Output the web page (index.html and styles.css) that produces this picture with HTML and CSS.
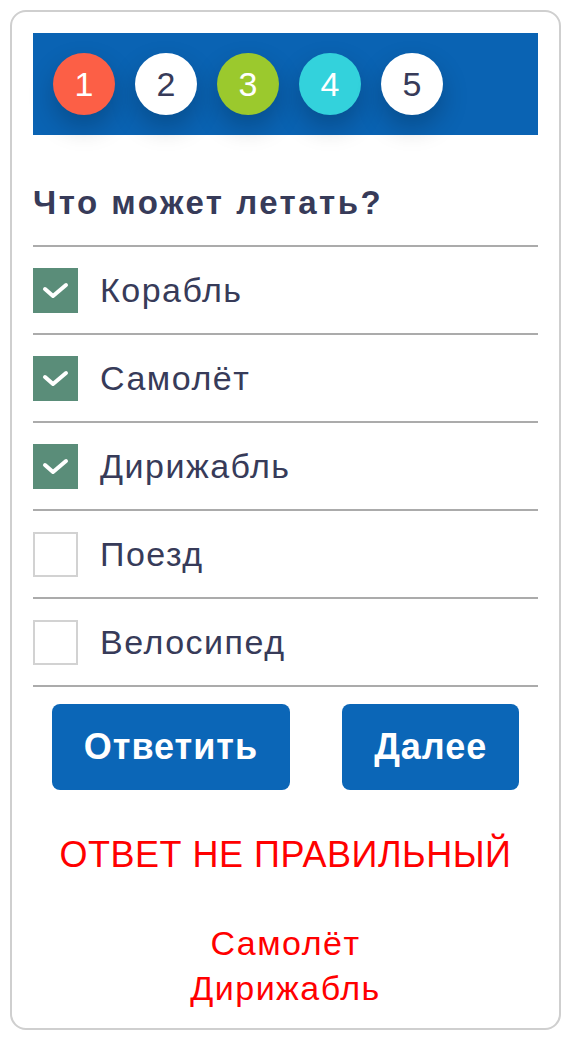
FILE: index.html
```html
<!DOCTYPE html>
<html lang="ru">
<head>
    <meta charset="UTF-8">
    <meta name="viewport" content="width=device-width, initial-scale=1.0">
    <title>Тест</title>
    <link rel="stylesheet" href="styles.css">
</head>
<body>
    <div class="card">
        <div class="steps">
            <span class="step step-red">1</span>
            <span class="step step-white">2</span>
            <span class="step step-green">3</span>
            <span class="step step-cyan">4</span>
            <span class="step step-white">5</span>
        </div>

        <h2 class="question">Что может летать?</h2>

        <ul class="options">
            <li class="option">
                <span class="box checked">
                    <svg viewBox="0 0 45 45" width="45" height="45"><polyline points="12,21 20,28 33,17" /></svg>
                </span>
                <span class="label">Корабль</span>
            </li>
            <li class="option">
                <span class="box checked">
                    <svg viewBox="0 0 45 45" width="45" height="45"><polyline points="12,21 20,28 33,17" /></svg>
                </span>
                <span class="label">Самолёт</span>
            </li>
            <li class="option">
                <span class="box checked">
                    <svg viewBox="0 0 45 45" width="45" height="45"><polyline points="12,21 20,28 33,17" /></svg>
                </span>
                <span class="label">Дирижабль</span>
            </li>
            <li class="option">
                <span class="box"></span>
                <span class="label">Поезд</span>
            </li>
            <li class="option">
                <span class="box"></span>
                <span class="label">Велосипед</span>
            </li>
        </ul>

        <div class="actions">
            <button class="btn btn-answer">Ответить</button>
            <button class="btn btn-next">Далее</button>
        </div>

        <div class="result">ОТВЕТ НЕ ПРАВИЛЬНЫЙ</div>
        <div class="correct">
            Самолёт<br>
            Дирижабль
        </div>
    </div>
</body>
</html>
```

FILE: styles.css
```css
* {
    box-sizing: border-box;
    margin: 0;
    padding: 0;
}

body {
    background-color: #fff;
    font-family: "Liberation Sans", Arial, sans-serif;
    color: #373b59;
}

.card {
    margin: 10px 15px 0 10px;
    border: 2px solid #cfcfcf;
    border-radius: 16px;
    padding: 21px 21px 17px 21px;
}

.steps {
    background-color: #0a63b3;
    display: flex;
    gap: 20px;
    padding: 20px;
}

.step {
    width: 62px;
    height: 62px;
    border-radius: 50%;
    display: flex;
    align-items: center;
    justify-content: center;
    font-size: 34px;
    color: #fff;
    box-shadow: 0 12px 26px rgba(0, 0, 0, 0.22);
}

.step-red {
    background-color: #fc5f46;
}

.step-white {
    background-color: #fff;
    color: #373b59;
}

.step-green {
    background-color: #9bc92d;
}

.step-cyan {
    background-color: #33d2dc;
}

.question {
    margin-top: 50px;
    padding-bottom: 24px;
    border-bottom: 2px solid #ababab;
    font-size: 33px;
    line-height: 36px;
    font-weight: bold;
    letter-spacing: 2.5px;
}

.options {
    list-style: none;
}

.option {
    display: flex;
    align-items: center;
    height: 88px;
    border-bottom: 2px solid #ababab;
}

.box {
    width: 45px;
    height: 45px;
    border: 2px solid #d2d2d2;
    background-color: #fff;
    margin-right: 22px;
    flex-shrink: 0;
}

.box.checked {
    border: none;
    background-color: #5a8d79;
}

.box svg {
    display: block;
    fill: none;
    stroke: #fff;
    stroke-width: 4;
    stroke-linecap: round;
    stroke-linejoin: round;
}

.label {
    font-size: 34px;
    letter-spacing: 1.5px;
}

.actions {
    display: flex;
    justify-content: center;
    gap: 52px;
    margin-top: 17px;
}

.btn {
    height: 86px;
    padding: 0 32px;
    border: none;
    border-radius: 8px;
    background-color: #0b66b7;
    color: #fff;
    font-family: "Liberation Sans", Arial, sans-serif;
    font-size: 36px;
    font-weight: bold;
    letter-spacing: 1px;
    cursor: pointer;
}

.result {
    margin-top: 44px;
    text-align: center;
    color: #f00;
    font-size: 36px;
    line-height: 42px;
    letter-spacing: 0.5px;
}

.correct {
    margin-top: 45px;
    text-align: center;
    color: #f00;
    font-size: 34px;
    line-height: 45px;
    letter-spacing: 1.5px;
}
```
